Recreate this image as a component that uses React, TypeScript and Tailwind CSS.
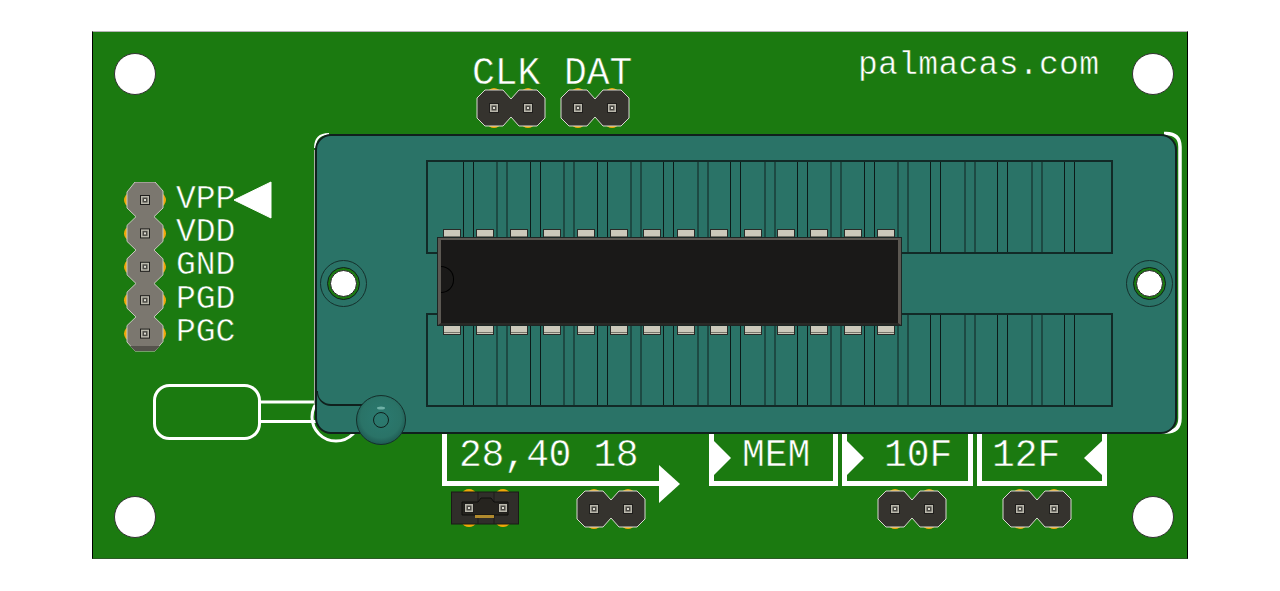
const Pad = ({ cx, cy }: { cx: number; cy: number }) => (
  <g>
    <rect x={cx - 5} y={cy - 5} width="10" height="10" fill="#1f1e1c" />
    <rect x={cx - 4} y={cy - 4} width="8" height="8" fill="#b9b7ab" />
    <rect x={cx - 2.5} y={cy - 2.5} width="5" height="5" fill="#4a4944" />
    <rect x={cx - 1} y={cy - 1} width="2" height="2" fill="#dcdad0" />
  </g>
);

const Header = () => (
  <svg className="shrink-0" width="70" height="42" viewBox="-1 -3 70 42">
    <ellipse cx="17" cy="18" rx="12" ry="20" fill="#f0a808" />
    <ellipse cx="51" cy="18" rx="12" ry="20" fill="#f0a808" />
    <path
      d="M8 0H26L34 9L42 0H60L68 8V28L60 36H42L34 27L26 36H8L0 28V8Z"
      fill="#35332e"
      stroke="#dad9d2"
      strokeWidth="1"
    />
    <Pad cx={17} cy={18} />
    <Pad cx={51} cy={18} />
  </svg>
);

const JumperHeader = () => (
  <svg className="mt-[1px] shrink-0" width="70" height="39" viewBox="0 0 70 39">
    <ellipse cx="19" cy="19" rx="12" ry="19" fill="#f0a808" />
    <ellipse cx="53" cy="19" rx="12" ry="19" fill="#f0a808" />
    <rect x="1.5" y="3" width="67" height="32" fill="#302e2a" stroke="#1a1917" />
    <path d="M28 3V35M44 3V35" stroke="#1c1b19" />
    <path d="M12 13H28L31 9H41L44 13H58V26H12Z" fill="#26241f" stroke="#0e0e0d" />
    <rect x="25" y="26" width="19" height="3" fill="#b08a2e" />
    <Pad cx={19} cy={19} />
    <Pad cx={53} cy={19} />
  </svg>
);

// the five pin programming header on the left
const ProgramHeader = () => {
  const centers = [18, 51.4, 84.8, 118.2, 151.6];
  let outline = "M8 0H28L36 9";
  centers.forEach((c, i) => {
    outline += `V${c + 8}`;
    if (i < centers.length - 1) outline += `L27 ${c + 16.7}L36 ${c + 25.4}`;
  });
  outline += "L28 169H8L0 160";
  [...centers].reverse().forEach((c, i) => {
    outline += `V${c - 8}`;
    if (i < centers.length - 1) outline += `L9 ${c - 16.7}L0 ${c - 25.4}`;
  });
  outline += "Z";
  return (
    <svg className="shrink-0" width="44" height="171" viewBox="-4 0 44 171">
      {centers.map((c) => (
        <ellipse key={c} cx="18" cy={c} rx="21" ry="12" fill="#f0a808" />
      ))}
      <path d={outline} fill="#7b776f" stroke="#c9c8bf" strokeWidth="1" />
      <path d="M8 169L3 164H33L28 169Z" fill="#55524c" />
      {centers.map((c) => (
        <Pad key={c} cx={18} cy={c} />
      ))}
    </svg>
  );
};

// lever outline, socket outline and the VPP marker
const Silk = () => (
  <svg
    className="absolute left-0 top-0"
    width="1094"
    height="526"
    viewBox="93 32 1094 526"
    fill="none"
    stroke="#ffffff"
  >
    <polygon points="234,200 271,182 271,218" fill="#ffffff" strokeWidth="1" strokeLinejoin="round" />
    <rect x="154.5" y="385.5" width="105" height="53" rx="15" strokeWidth="3" />
    <path d="M260 402H320M260 421.5H320" strokeWidth="3" />
    <circle cx="336" cy="417" r="24" strokeWidth="3" />
    <path d="M1164 133.5H1166Q1180 133.5 1180 147V418Q1180 432 1166 432H1150" strokeWidth="3.5" />
    <path d="M315 148Q315 134 329 134" strokeWidth="2" />
    <path d="M314.5 150V405" stroke="#a8b0a0" strokeWidth="1" />
  </svg>
);

const Slot = () => (
  <div className="flex h-[94px] w-[687px] border-2 border-[#122a27] pl-[35px]">
    {Array.from({ length: 38 }).map((_, i) => {
      const pair = Math.floor(i / 2);
      const width = i % 2 === 0 ? "w-[10px]" : "w-[23.4px]";
      const line = pair % 2 === 0 ? "border-l border-[#0c1a18]" : "border-l-2 border-[#1d4a43]";
      return <div key={i} className={`h-full shrink-0 ${width} ${line}`} />;
    })}
  </div>
);

const ScrewHole = ({ className }: { className: string }) => (
  <div
    className={`absolute top-[124px] flex h-[47px] w-[47px] items-center justify-center rounded-full border border-[#15302c] ${className}`}
  >
    <div className="flex h-[33px] w-[33px] items-center justify-center rounded-full border border-[#10201d] bg-[#1b7a10]">
      <div className="h-[27px] w-[27px] rounded-full border border-[#222] bg-white" />
    </div>
  </div>
);

const PinRow = ({ className }: { className: string }) => (
  <div className={`absolute left-[126px] flex gap-[15.4px] ${className}`}>
    {Array.from({ length: 14 }).map((_, i) => (
      <div key={i} className="h-[10px] w-[18px] border border-[#2a2a27] bg-[#cbc8ba]">
        <div className="mt-[6px] h-px bg-[#77756b]" />
      </div>
    ))}
  </div>
);

const Socket = () => (
  <div className="absolute left-[222px] top-[102px] h-[300px] w-[862px] rounded-[16px] border-2 border-[#10201d] bg-[#2a7367] pl-[109px] pt-[24px]">
    <div className="flex flex-col gap-[59px]">
      <Slot />
      <Slot />
    </div>
    <ScrewHole className="left-[3px]" />
    <ScrewHole className="left-[809px]" />
    <PinRow className="top-[93px]" />
    <PinRow className="top-[189px]" />
    <div className="absolute left-[121px] top-[102px] flex h-[87px] w-[463px] items-center border-x-[3px] border-t-2 border-b-2 border-x-[#5c5852] border-t-[#5c5852] border-b-[#2a2926] bg-[#1a1918] shadow-[0_0_0_1px_#1c2624]">
      <div className="-mt-[4px] h-[27px] w-[13px] rounded-r-full border border-l-0 border-black" />
    </div>
    {/* lever step */}
    <div className="absolute left-0 top-[255px] h-[15px] w-[50px] rounded-bl-[14px] border-b-2 border-l border-[#10201d]" />
  </div>
);

const Knob = () => (
  <svg className="absolute left-[263px] top-[363px]" width="50" height="50" viewBox="0 0 50 50">
    <defs>
      <radialGradient id="knob" cx="50%" cy="45%" r="55%">
        <stop offset="0%" stopColor="#2b7a70" />
        <stop offset="75%" stopColor="#2a7367" />
        <stop offset="100%" stopColor="#1e5a52" />
      </radialGradient>
    </defs>
    <circle cx="25" cy="25" r="24.5" fill="url(#knob)" stroke="#15302c" />
    <ellipse cx="25" cy="13" rx="4" ry="1.5" fill="#6fb0a6" />
    <circle cx="25" cy="25" r="7.5" fill="none" stroke="#10201d" />
  </svg>
);

const Marker = ({ points, className }: { points: string; className?: string }) => (
  <svg className={`mt-[7px] shrink-0 ${className ?? ""}`} width="18" height="34" viewBox="0 0 18 34">
    <polygon points={points} fill="#ffffff" />
  </svg>
);

const silkThin = "font-['Liberation_Mono',monospace] text-white whitespace-pre [-webkit-text-stroke:0.5px_#1b7a10]";
const labelBig = `${silkThin} text-[38px] leading-none`;
const labelSmall = `${silkThin} text-[33px] leading-[26px]`;
const frame = "flex h-[52px] shrink-0 items-start border-x-[5px] border-b-[5px] border-white";
const hole = "h-[42px] w-[42px] rounded-full border border-[#333] bg-white";

export default function App() {
  return (
    <div className="h-[591px] w-[1280px] overflow-hidden bg-white pl-[92px] pt-[31px]">
      <div className="relative h-[528px] w-[1096px] border border-t-[#b5b5b5] border-l-black border-r-black border-b-[#2c5a26] bg-[#1b7a10]">
        {/* board mounting holes */}
        <div className="absolute left-[21px] top-[21px] flex h-[485px] w-[1060px] flex-col justify-between">
          <div className="flex justify-between">
            <div className={hole} />
            <div className={hole} />
          </div>
          <div className="flex justify-between">
            <div className={hole} />
            <div className={hole} />
          </div>
        </div>

        <Silk />
        <Socket />
        <Knob />

        {/* programming header and its labels */}
        <div className="absolute left-[30px] top-[150px] flex gap-[9px]">
          <ProgramHeader />
          <div className="flex flex-col gap-[7.4px] pt-[4.5px]">
            {["VPP", "VDD", "GND", "PGD", "PGC"].map((name) => (
              <span key={name} className={labelSmall}>
                {name}
              </span>
            ))}
          </div>
        </div>

        {/* clock and data headers */}
        <div className="absolute left-[379px] top-[25px] flex flex-col">
          <div className="flex gap-[23.6px]">
            <span className={`${silkThin} text-[38px] leading-[34px]`}>CLK</span>
            <span className={`${silkThin} text-[38px] leading-[34px]`}>DAT</span>
          </div>
          <div className="-mt-[4px] flex gap-[14px] pl-[4px]">
            <Header />
            <Header />
          </div>
        </div>

        <span className={`${silkThin} absolute left-[765px] top-[17px] text-[33px] leading-none tracking-[0.3px]`}>
          palmacas.com
        </span>

        {/* mode frames under the socket */}
        <div className="absolute left-[349px] top-[402px] flex">
          <div className="relative flex h-[52px] w-[220px] shrink-0 items-start border-b-[5px] border-l-[5px] border-white pl-[12px]">
            <span className={`${labelBig} mt-[3px] tracking-[-0.4px]`}>28,40 18</span>
            <svg className="absolute left-[212px] top-[31px]" width="22" height="38" viewBox="0 0 22 38">
              <polygon points="0,0 21,19 0,38" fill="#ffffff" />
            </svg>
          </div>
          <div className={`${frame} ml-[47px] w-[129px]`}>
            <Marker points="0,0 17,17 0,34" />
            <span className={`${labelBig} ml-[10px] mt-[3px]`}>MEM</span>
          </div>
          <div className={`${frame} ml-[4px] w-[131px]`}>
            <Marker points="0,0 17,17 0,34" />
            <span className={`${labelBig} ml-[19px] mt-[3px]`}>10F</span>
          </div>
          <div className={`${frame} ml-[4px] w-[130px] pl-[10px]`}>
            <span className={`${labelBig} mt-[3px]`}>12F</span>
            <Marker points="18,0 0,17 18,34" className="ml-auto" />
          </div>
        </div>

        {/* jumper headers */}
        <div className="absolute left-[357px] top-[456px] flex items-start">
          <JumperHeader />
          <div className="ml-[56px]">
            <Header />
          </div>
          <div className="ml-[231px]">
            <Header />
          </div>
          <div className="ml-[55px]">
            <Header />
          </div>
        </div>
      </div>
    </div>
  );
}
